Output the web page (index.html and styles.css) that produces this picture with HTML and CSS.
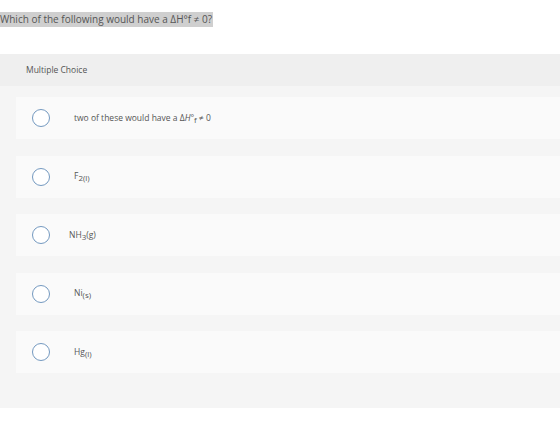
FILE: index.html
```html
<!DOCTYPE html>
<html lang="en">
<head>
    <meta charset="UTF-8">
    <title>Question</title>
    <link rel="stylesheet" href="styles.css">
</head>
<body>
    <div class="prompt">
        <span class="prompt-text">Which of the following would have a &Delta;H&deg;f &ne; 0?</span>
    </div>

    <div class="question">
        <div class="question-header">Multiple Choice</div>

        <div class="choices">
            <div class="choice">
                <span class="radio"></span>
                <span class="label">two of these would have a &Delta;<i>H</i>&deg;<sub>f</sub> &ne; 0</span>
            </div>
            <div class="choice">
                <span class="radio"></span>
                <span class="label">F<sub>2(l)</sub></span>
            </div>
            <div class="choice">
                <span class="radio"></span>
                <span class="label label-tight">NH<sub>3</sub>(g)</span>
            </div>
            <div class="choice">
                <span class="radio"></span>
                <span class="label">Ni<sub>(s)</sub></span>
            </div>
            <div class="choice">
                <span class="radio"></span>
                <span class="label">Hg<sub>(l)</sub></span>
            </div>
        </div>
    </div>
</body>
</html>
```

FILE: styles.css
```css
body {
    margin: 0;
    font-family: 'Open Sans', 'Lato', sans-serif;
    color: #555;
    background: #fff;
}

.prompt {
    padding-top: 6px;
    height: 48px;
}

.prompt-text {
    display: inline-block;
    background-color: #cfcfcf;
    font-size: 10px;
    line-height: 15px;
    color: #555;
    padding-right: 1px;
}

.question {
    background-color: #f5f5f5;
    padding-bottom: 35px;
}

.question-header {
    background-color: #efefef;
    height: 32px;
    line-height: 32px;
    padding-left: 26px;
    font-size: 8.5px;
    color: #555;
}

.choices {
    padding-top: 11px;
    padding-left: 16px;
    display: flex;
    flex-direction: column;
    gap: 16.5px;
}

.choice {
    background-color: #fafafa;
    height: 42px;
    display: flex;
    align-items: center;
    padding-left: 16px;
}

.radio {
    width: 16px;
    height: 16px;
    border: 1.5px solid #7499c0;
    border-radius: 50%;
    background: #fff;
    flex-shrink: 0;
}

.label {
    margin-left: 24px;
    font-size: 8.5px;
    color: #555;
}

.label-tight {
    margin-left: 19px;
}

.label sub {
    font-size: 8px;
    vertical-align: -2px;
}

.label i {
    font-style: italic;
}
```
